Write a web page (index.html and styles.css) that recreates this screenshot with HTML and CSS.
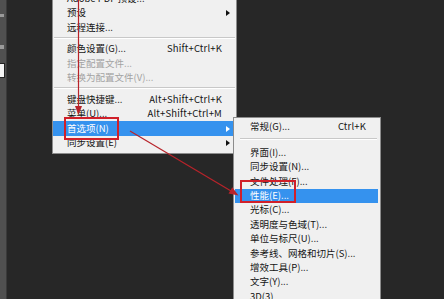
FILE: index.html
```html
<!DOCTYPE html>
<html lang="zh-CN">
<head>
<meta charset="utf-8">
<title>首选项 - 性能</title>
<link rel="stylesheet" href="styles.css">
</head>
<body>
<div class="app">
  <aside class="toolstrip">
    <span class="tool-mark"></span>
    <span class="tool-mark tool-mark-b"></span>
    <span class="tool-box"></span>
  </aside>
  <main class="workspace">
    <div class="menu main-menu">
      <div class="item"><span class="label">Adobe PDF 预设...</span></div>
      <div class="item"><span class="label">预设</span><span class="arrow-slot"><i class="arrow"></i></span></div>
      <div class="item"><span class="label">远程连接...</span></div>
      <div class="sep"></div>
      <div class="item"><span class="label">颜色设置(G)...</span><span class="key">Shift+Ctrl+K</span></div>
      <div class="item disabled"><span class="label">指定配置文件...</span></div>
      <div class="item disabled"><span class="label">转换为配置文件(V)...</span></div>
      <div class="sep"></div>
      <div class="item"><span class="label">键盘快捷键...</span><span class="key">Alt+Shift+Ctrl+K</span></div>
      <div class="item"><span class="label">菜单(U)...</span><span class="key">Alt+Shift+Ctrl+M</span></div>
      <div class="item active"><span class="label">首选项(N)</span><span class="arrow-slot"><i class="arrow"></i></span></div>
      <div class="item"><span class="label">同步设置(E)</span><span class="arrow-slot"><i class="arrow"></i></span></div>
    </div>

    <div class="menu submenu">
      <div class="item"><span class="label">常规(G)...</span><span class="key">Ctrl+K</span></div>
      <div class="sep sub-sep"></div>
      <div class="item"><span class="label">界面(I)...</span></div>
      <div class="item"><span class="label">同步设置(N)...</span></div>
      <div class="item"><span class="label">文件处理(F)...</span></div>
      <div class="item active"><span class="label">性能(E)...</span></div>
      <div class="item"><span class="label">光标(C)...</span></div>
      <div class="item"><span class="label">透明度与色域(T)...</span></div>
      <div class="item"><span class="label">单位与标尺(U)...</span></div>
      <div class="item"><span class="label">参考线、网格和切片(S)...</span></div>
      <div class="item"><span class="label">增效工具(P)...</span></div>
      <div class="item"><span class="label">文字(Y)...</span></div>
      <div class="item"><span class="label">3D(3)</span></div>
    </div>

    <svg class="annotations" width="444" height="299" viewBox="0 0 444 299" aria-hidden="true">
      <line x1="78.5" y1="0" x2="78.5" y2="108" class="arrow-line"/>
      <polygon points="75,106 82,106 78.5,115" class="arrow-head"/>
      <line x1="130" y1="131" x2="231" y2="191" class="arrow-line"/>
      <polygon points="228.5,193.6 232.3,187.2 238.5,195.5" class="arrow-head"/>
      <rect x="65" y="118" width="53" height="21" class="box"/>
      <rect x="241" y="181" width="54" height="21" class="box"/>
    </svg>
  </main>
</div>
</body>
</html>
```

FILE: styles.css
```css
* { box-sizing: border-box; }

html, body {
  margin: 0;
  padding: 0;
  width: 444px;
  height: 299px;
  overflow: hidden;
  background: #272727;
}

.app {
  display: flex;
  height: 299px;
  font-family: "Noto Sans CJK SC", "Noto Sans", sans-serif;
  font-size: 9.5px;
}

.toolstrip {
  width: 7px;
  flex: none;
  background: #505050;
  border-right: 1px solid #3a3a3a;
  display: flex;
  flex-direction: column;
  padding-top: 14px;
}

.tool-mark {
  width: 4px;
  height: 3px;
  background: #9a9a9a;
}

.tool-mark-b {
  margin-top: 28px;
  height: 4px;
}

.tool-box {
  margin-top: 14px;
  width: 5px;
  height: 15px;
  background: #f4f4f4;
  border: 1px solid #222;
  border-left: none;
}

.workspace {
  flex: 1;
  position: relative;
  padding-left: 45px;
}

.menu {
  background: #f0f0f0;
  border: 1px solid #8c8c8c;
  padding: 2px 0;
  color: #141414;
  line-height: 1;
}

.main-menu {
  width: 185px;
  margin-top: -12px;
}

.item {
  display: flex;
  align-items: center;
  height: 14.6px;
  padding: 0 6px 0 14px;
  white-space: nowrap;
}

.label { flex: 1; }

.key {
  letter-spacing: 0.15px;
}

.arrow-slot {
  width: 8px;
  display: flex;
  justify-content: flex-end;
}

.item .key { margin-right: 8px; }

.arrow {
  width: 0;
  height: 0;
  border-left: 4px solid #111;
  border-top: 3.5px solid transparent;
  border-bottom: 3.5px solid transparent;
}

.disabled { color: #a3a3a3; }

.active {
  background: #3592ee;
  color: #fff;
}

.active .arrow { border-left-color: #fff; }

.sep {
  margin: 2px 1px 2.8px;
  border-top: 1px solid #c8c8c8;
  border-bottom: 1px solid #ffffff;
}

.submenu {
  position: absolute;
  left: 226px;
  top: 117px;
  width: 148px;
  height: 190px;
}

.submenu .item {
  height: 14.4px;
  padding-left: 15px;
  margin: 0 2px 0 1px;
}

.submenu .item .key { margin-right: 6px; }

.sub-sep {
  margin: 4px 3px 5px 6px;
}

.annotations {
  position: absolute;
  left: -7px;
  top: 0;
  pointer-events: none;
}

.arrow-line {
  stroke: #b8232a;
  stroke-width: 1.2;
}

.arrow-head { fill: #b8232a; }

.box {
  fill: none;
  stroke: #d0202a;
  stroke-width: 2;
}
```
